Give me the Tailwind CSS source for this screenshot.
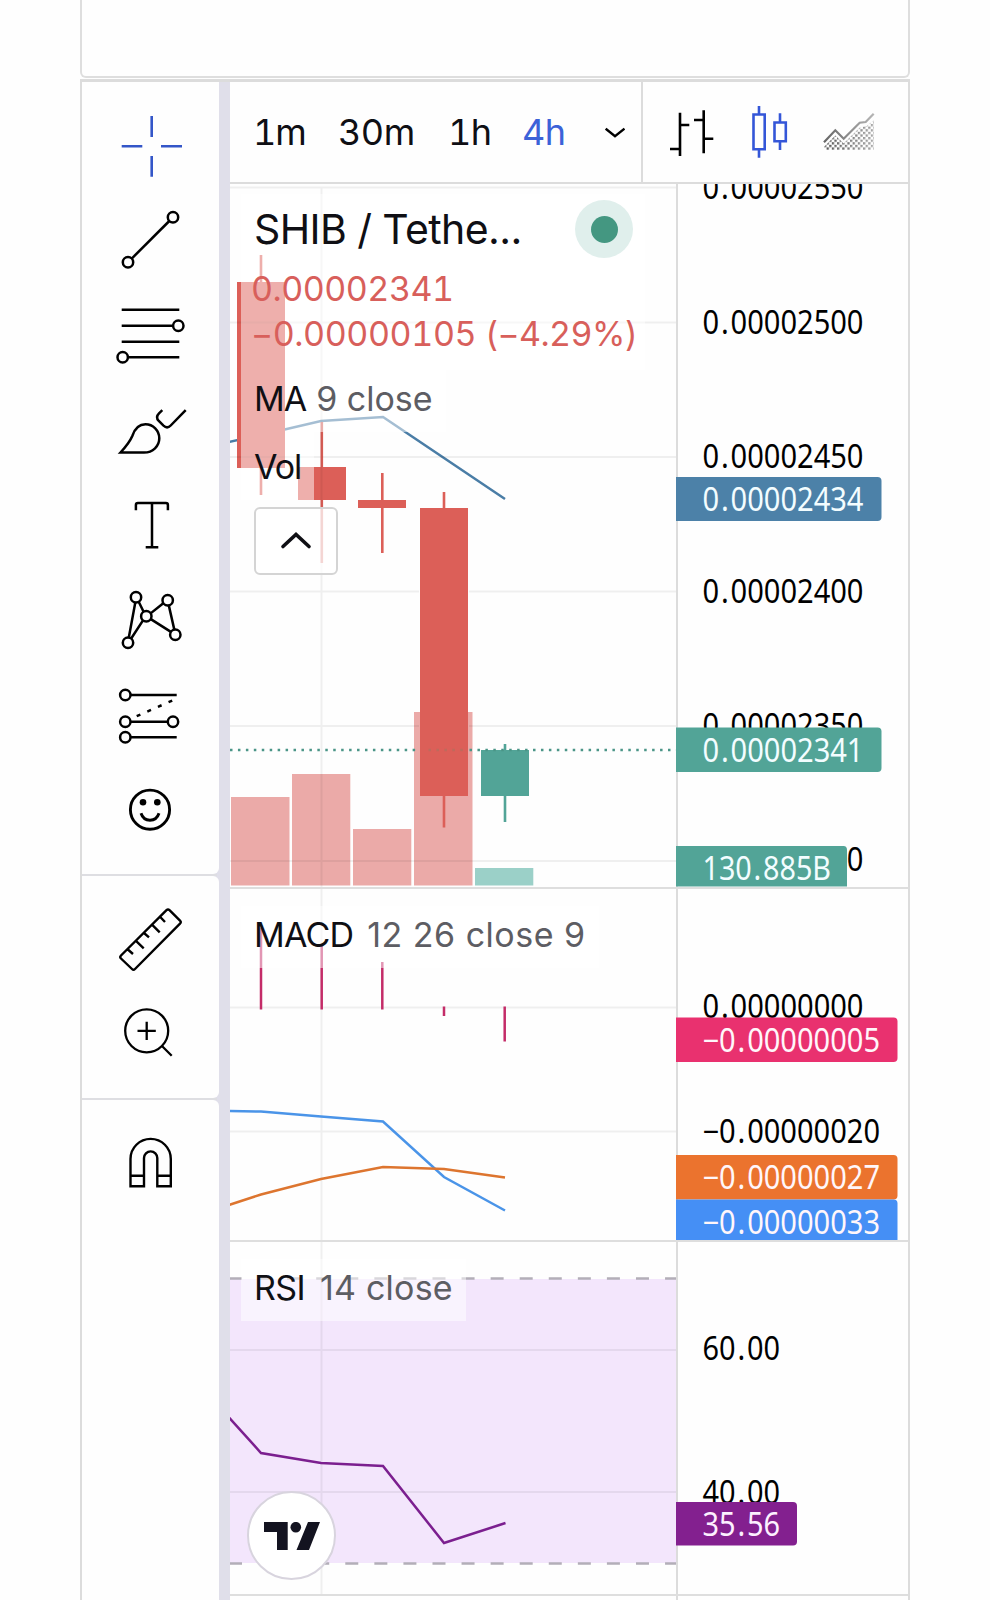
<!DOCTYPE html>
<html lang="en">
<head>
    <meta charset="UTF-8">
    <meta name="viewport" content="width=device-width, initial-scale=1.0">
    <title>SHIB / Tether Chart</title>
    <script src="https://cdn.jsdelivr.net/npm/@tailwindcss/browser@4"></script>
</head>
<body class="bg-[#fefefe] font-['Inter',sans-serif] text-[#0f0f14]">
    <div class="w-[990px] h-[1600px] overflow-hidden flex flex-col pl-20 pr-20">
        <!-- Panel above the widget -->
        <div class="h-[78px] shrink-0 border-2 border-t-0 border-[#dedede] rounded-b-md"></div>

        <!-- Chart widget -->
        <div class="mt-px h-[1530px] w-[830px] shrink-0 border-3 border-x-2 border-b-0 border-[#dcdcdc] flex">

            <!-- Drawing toolbar -->
            <div class="w-[148px] shrink-0 bg-[#e0dfea] pr-[11px] flex flex-col">
                <div class="h-[792px] shrink-0 pt-[17px] bg-[#fefefe] rounded-br-md flex flex-col">
                    <svg class="w-[137px] h-[95px]" viewBox="0 0 137 95" fill="none" stroke="#3456c8" stroke-width="2.6">
                        <path d="M39.7 47.3H60.3M79 47.3H100M69.7 17V38M69.7 57V77.7"/>
                    </svg>
                    <svg class="w-[137px] h-[95px]" viewBox="0 0 137 95" fill="none" stroke="#000" stroke-width="2.5">
                        <circle cx="91" cy="23.3" r="5.2"/><circle cx="46" cy="68.3" r="5.2"/>
                        <path d="M87.3 27L49.7 64.6"/>
                    </svg>
                    <svg class="w-[137px] h-[95px]" viewBox="0 0 137 95" fill="none" stroke="#000" stroke-width="2.5">
                        <path d="M39.7 20.7H97.3M39.7 36.7H91M39.7 52.7H97.3M46 68.3H97.3"/>
                        <circle cx="96.3" cy="36.7" r="5.2"/><circle cx="40.7" cy="68.3" r="5.2"/>
                    </svg>
                    <svg class="w-[137px] h-[95px]" viewBox="0 0 137 95" fill="none" stroke="#000" stroke-width="2.5">
                        <path d="M38.5 68.5C44 62.5 48 57.5 50.3 52C52.5 45.5 56.5 40.3 63.5 40.3C71 40.3 77.3 46.5 77.3 54.3C77.3 62 71 68.5 62 68.5Z"/>
                        <path d="M80.3 26.2L77 29.3C74.5 31.8 74.5 34.5 76.8 37L81.5 41.7C84 44 86.3 44 88.7 41.5L103.7 26.2"/>
                    </svg>
                    <svg class="w-[137px] h-[95px]" viewBox="0 0 137 95" fill="none" stroke="#000" stroke-width="2.5">
                        <path d="M53.9 31.3V26Q53.9 24 55.9 24H83.9Q85.9 24 85.9 26V31.3M70 24V68.3M63.7 68.3H76.3"/>
                    </svg>
                    <svg class="w-[137px] h-[95px]" viewBox="0 0 137 95" fill="none" stroke="#000" stroke-width="2.5">
                        <circle cx="54" cy="23.3" r="5.2"/><circle cx="85.7" cy="26.3" r="5.2"/>
                        <circle cx="64.3" cy="42.3" r="5.2"/><circle cx="93.3" cy="60.7" r="5.2"/>
                        <circle cx="46" cy="68.7" r="5.2"/>
                        <path d="M53.3 28.5L46.8 63.5M56.7 27.8L61.6 37.8M61 46.4L49.2 64.5M68.6 39.4L81.3 29.2M68.8 45.1L88.9 57.9M86.8 31.4L92.3 55.6"/>
                    </svg>
                    <svg class="w-[137px] h-[95px]" viewBox="0 0 137 95" fill="none" stroke="#000" stroke-width="2.5">
                        <circle cx="43.3" cy="26" r="5.2"/><circle cx="43.3" cy="52.7" r="5.2"/>
                        <circle cx="91" cy="52.7" r="5.2"/><circle cx="43.3" cy="68.3" r="5.2"/>
                        <path d="M48.5 26H94.7M48.5 52.7H85.8M48.5 68.3H94.7"/>
                        <path d="M54.7 47.2L91.5 31" stroke-dasharray="4 7.6"/>
                    </svg>
                    <svg class="w-[137px] h-[95px]" viewBox="0 0 137 95" fill="none" stroke="#000" stroke-width="2.9">
                        <circle cx="68" cy="45.7" r="19.6"/>
                        <circle cx="61" cy="38.3" r="3.3" fill="#000" stroke="none"/>
                        <circle cx="75.3" cy="38.3" r="3.3" fill="#000" stroke="none"/>
                        <path d="M59 49.3C62 58.5 74 58.5 77 49.3"/>
                    </svg>
                </div>
                <div class="h-[2px] w-[135px] shrink-0 bg-[#dedee2]"></div>
                <div class="h-[222px] shrink-0 pt-4 bg-[#fefefe] rounded-r-md flex flex-col">
                    <svg class="w-[137px] h-[95px]" viewBox="0 0 137 95" fill="none" stroke="#000" stroke-width="2.4">
                        <path d="M84.5 18.2Q86 16.7 87.5 18.2L98 28.7Q99.5 30.2 98 31.7L53 77Q51.5 78.5 50 77L39 66.5Q37.5 65 39 63.5ZM45.3 57L51 62M53.7 48.7L61.7 56.3M62 41L67 45.3M70 32.7L77.7 40.3M78 24.7L83 30"/>
                    </svg>
                    <svg class="w-[137px] h-[95px]" viewBox="0 0 137 95" fill="none" stroke="#000" stroke-width="2.3">
                        <circle cx="64.7" cy="43.8" r="21.5"/>
                        <path d="M55.5 43.8H73.8M64.7 34.7V53M79.7 58.8L89.7 68.8"/>
                    </svg>
                </div>
                <div class="h-[2px] w-[135px] shrink-0 bg-[#dedee2]"></div>
                <div class="grow pt-[15px] bg-[#fefefe] rounded-tr-md">
                    <svg class="w-[137px] h-[95px]" viewBox="0 0 137 95" fill="none" stroke="#000" stroke-width="2.4">
                        <path d="M48.5 71.3V44A20.15 20.15 0 0 1 88.8 44V71.3H75.3V43A6.65 6.65 0 0 0 62 43V71.3ZM48.5 60.7H62M75.3 60.7H88.8"/>
                    </svg>
                </div>
            </div>

            <!-- Chart column -->
            <div class="w-[678px] shrink-0 flex flex-col">
                <!-- Interval and style bar -->
                <div class="h-[102px] shrink-0 border-b-2 border-[#dcdcdc] flex">
                    <div class="w-[413px] shrink-0 border-r-2 border-[#dcdcdc] flex items-center pl-[23px] text-[36px] leading-[44px] tabular-nums">
                        <span class="w-[85px] tracking-[-1px]">1m</span>
                        <span class="w-[110px] tracking-[-0.5px]">30m</span>
                        <span class="w-[74px] tracking-[-0.5px]">1h</span>
                        <span class="w-[83px] text-[#3c62d8] tracking-[-0.5px]">4h</span>
                        <svg class="w-5 h-3 mt-0.5" viewBox="605 126 20 12" fill="none" stroke="#000" stroke-width="2.4"><path d="M605.7 127.7L615 135.3L624.5 127.7"/></svg>
                    </div>
                    <svg class="w-[265px] h-[100px]" viewBox="643 82 265 100" fill="none" stroke-width="2.6">
                        <defs>
                            <pattern id="checker" width="5.2" height="5.2" x="824" y="124" patternUnits="userSpaceOnUse">
                                <rect width="2.3" height="2.3" fill="#555"/>
                                <rect x="2.6" y="2.6" width="2.3" height="2.3" fill="#555"/>
                            </pattern>
                            <linearGradient id="fadeLine" x1="0" x2="1"><stop offset="0" stop-color="#666"/><stop offset="1" stop-color="#b5b5b5"/></linearGradient>
                            <linearGradient id="fadeFill" x1="0" x2="1"><stop offset="0" stop-color="#fff" stop-opacity="0"/><stop offset="1" stop-color="#fff" stop-opacity=".5"/></linearGradient>
                        </defs>
                        <path stroke="#000" d="M680 112.7V156M680 125H689.3M670 149H680M703.7 110.3V153.3M694 120H703.7M703.7 138.7H713.3"/>
                        <path stroke="#3456d8" d="M753.5 114.5H764.7V149.3H753.5ZM759 106V114.5M759 149.3V157.7M774.5 122.5H785.8V141.3H774.5ZM780 113.3V122.5M780 141.3V150"/>
                        <path fill="url(#checker)" d="M824 147L835.3 135.5L843.7 143.5L860 127.5L867 126L874 120V150H824Z"/>
                        <path fill="url(#fadeFill)" d="M824 147L835.3 135.5L843.7 143.5L860 127.5L867 126L874 120V150H824Z"/>
                        <path stroke="url(#fadeLine)" stroke-width="2.2" d="M824 142.3L835.3 130.3L843.7 138.7L859.7 122.7L865.7 122L873.7 113.7"/>
                    </svg>
                </div>

                <!-- Price pane -->
                <div class="relative h-[705px] shrink-0 border-b-2 border-[#dedede] flex">
                    <svg class="w-[446px] h-[703px] shrink-0" viewBox="230 184 446 703">
                        <path stroke="#4a7da6" stroke-width="2.5" fill="none" d="M229 442L261 435L321 421L383 417L505 499"/>
                        <g fill="#dc5f58">
                            <path d="M259.7 255h2.6v240h-2.6zM237 282h48v186h-48z"/>
                            <path d="M320.5 422h2.6v141h-2.6zM298 467h48v33h-48z"/>
                            <path d="M381 473h2.6v80h-2.6zM358 500h48v8h-48z"/>
                        </g>
                        <g fill="#ebaaa8">
                            <path d="M231 797h58.5v88.5h-58.5zM292 774h58.3v111.5h-58.3zM353 829h58.3v56.5h-58.3zM414 712h58.5v173.5h-58.5z"/>
                        </g>
                        <path fill="#9bd0c8" d="M475 868h58.3v17.5h-58.3z"/>
                        <path fill="#dc5f58" d="M442.7 492h2.6v335.5h-2.6zM420 508h48v288h-48z"/>
                        <path fill="#52a497" d="M503.7 744h2.6v78h-2.6zM481 750h48v46h-48z"/>
                        <path stroke="#000" stroke-opacity=".06" stroke-width="2" d="M229 187.5H676M229 322.5H676M229 457H676M229 591.5H419M469 591.5H676M229 726H419M469 726H676M229 861H676M321.5 188V887"/>
                        <path stroke="#4a9587" stroke-width="2.3" stroke-dasharray="2.5 5.44" d="M230 750H420M469.5 750H676"/>
                        <path stroke="#a0755f" stroke-opacity=".5" stroke-width="2.3" stroke-dasharray="2.5 5.44" d="M428.5 750H468"/>
                    </svg>
                    <svg class="w-[232px] h-[703px] shrink-0 border-l-2 border-[#dcdcdc]" viewBox="678 184 230 703" font-family="'Noto Sans', sans-serif" font-size="32">
                        <g fill="#000">
                            <text x="702.5" y="198.5" dx="0 2 2" textLength="161" lengthAdjust="spacingAndGlyphs">0.00002550</text>
                            <text x="702.5" y="333.5" dx="0 2 2" textLength="161" lengthAdjust="spacingAndGlyphs">0.00002500</text>
                            <text x="702.5" y="468" dx="0 2 2" textLength="161" lengthAdjust="spacingAndGlyphs">0.00002450</text>
                            <text x="702.5" y="602.5" dx="0 2 2" textLength="161" lengthAdjust="spacingAndGlyphs">0.00002400</text>
                            <text x="702.5" y="737" dx="0 2 2" textLength="161" lengthAdjust="spacingAndGlyphs">0.00002350</text>
                            <text x="702.5" y="871" dx="0 2 2" textLength="161" lengthAdjust="spacingAndGlyphs">0.00002300</text>
                        </g>
                    </svg>
                    <!-- Price tags -->
                    <svg class="absolute left-[446px] top-0 w-[232px] h-[703px]" viewBox="676 184 232 703" font-family="'Noto Sans', sans-serif" font-size="32">
                        <path fill="#4c81a8" d="M676 477H877.5q4 0 4 4V517q0 4-4 4H676z"/>
                        <path fill="#52a497" d="M676 727.5H877.5q4 0 4 4V768q0 4-4 4H676z"/>
                        <path fill="#52a497" d="M676 846H843.5q3.5 0 3.5 4V886.5H676z"/>
                        <g fill="#f3fdff">
                            <text x="702.5" y="510.5" dx="0 2 2" textLength="161" lengthAdjust="spacingAndGlyphs">0.00002434</text>
                            <text x="702.5" y="761.5" dx="0 2 2" textLength="161" lengthAdjust="spacingAndGlyphs">0.00002341</text>
                            <text x="702.5" y="880" dx="0 0 0 2 2" textLength="128.5" lengthAdjust="spacingAndGlyphs">130.885B</text>
                        </g>
                    </svg>
                    <!-- Legend -->
                    <div class="absolute left-[11px] top-2.5 flex flex-col items-start">
                        <div class="w-[404px] h-[176px] bg-white/50 pl-[13px] flex flex-col">
                            <div class="flex items-center justify-between pt-1.5 pr-[12px]">
                                <h1 class="text-[41px] leading-[58px] tracking-[-0.6px] whitespace-nowrap">SHIB / Tethe...</h1>
                                <span class="size-[58px] rounded-full bg-[#e0efec] flex items-center justify-center"><span class="size-[27px] rounded-full bg-[#449781]"></span></span>
                            </div>
                            <div class="-ml-[3px] pt-2 text-[34px] leading-[45px] text-[#d85f5b] tabular-nums whitespace-nowrap">
                                <div class="tracking-[-0.5px]">0.00002341</div>
                                <div class="tracking-[-0.4px]">−0.00000105 <span class="tracking-[-0.6px]">(−4.29%)</span></div>
                            </div>
                        </div>
                        <div class="h-[62px] bg-white/50 px-[13px] text-[34px] leading-[58px] whitespace-nowrap flex gap-[10px]"><span class="tracking-[-1px]">MA</span><span class="text-[#5d5d63]">9 close</span></div>
                        <div class="h-[68px] bg-white/50 px-[13px] text-[34px] leading-[70px] tracking-[-1px]">Vol</div>
                        <button class="ml-[13px] mt-[7px] w-[84px] h-[68px] border-2 border-[#d4d4d4] rounded-md bg-white/75 flex items-center justify-center">
                            <svg class="w-8 h-5" viewBox="0 0 32 20" fill="none" stroke="#0f0f14" stroke-width="3.6" stroke-linecap="round"><path d="M3 15.5L16 3.5L29 15.5"/></svg>
                        </button>
                    </div>
                </div>

                <!-- MACD pane -->
                <div class="relative h-[353px] shrink-0 border-b-2 border-[#dedede] flex">
                    <svg class="w-[446px] h-[351px] shrink-0" viewBox="230 889 446 351" fill="none">
                        <path stroke="#000" stroke-opacity=".06" stroke-width="2" d="M229 1007.5H676M229 1131.5H676M321.5 889V1240"/>
                        <path stroke="#c42c68" stroke-width="2.5" d="M261 928V1009.5M321.7 946V1009.5M382.3 962V1009.5M444 1006.5V1016M504.7 1006.5V1041.5"/>
                        <path stroke="#4a94e8" stroke-width="2.5" d="M229 1111L261 1111.5L321 1116.5L383 1121.5L444 1177L505 1210.5"/>
                        <path stroke="#dd752f" stroke-width="2.5" d="M229 1205L261 1194.5L321 1179L383 1167L444 1169L505 1177.5"/>
                    </svg>
                    <svg class="w-[232px] h-[351px] shrink-0 border-l-2 border-[#dcdcdc]" viewBox="678 889 230 351" font-family="'Noto Sans', sans-serif" font-size="32" fill="#000">
                        <text x="702.5" y="1018" dx="0 2 2" textLength="161" lengthAdjust="spacingAndGlyphs">0.00000000</text>
                        <text x="702.5" y="1142.5" dx="0 0 2 2" textLength="177.5" lengthAdjust="spacingAndGlyphs">−0.00000020</text>
                    </svg>
                    <svg class="absolute left-[446px] top-0 w-[232px] h-[351px]" viewBox="676 889 232 351" font-family="'Noto Sans', sans-serif" font-size="32">
                        <path fill="#e9316f" d="M676 1017.5H893.5q4 0 4 4V1058q0 4-4 4H676z"/>
                        <path fill="#eb732e" d="M676 1155H893.5q4 0 4 4V1195.5q0 4-4 4H676z"/>
                        <path fill="#458ff5" d="M676 1199.5H893.5q4 0 4 4V1240H676z"/>
                        <g fill="#fff6fa">
                            <text x="702.5" y="1051.5" dx="0 0 2 2" textLength="177.5" lengthAdjust="spacingAndGlyphs">−0.00000005</text>
                            <text x="702.5" y="1188.5" dx="0 0 2 2" textLength="177.5" lengthAdjust="spacingAndGlyphs">−0.00000027</text>
                            <text x="702.5" y="1233.5" dx="0 0 2 2" textLength="177.5" lengthAdjust="spacingAndGlyphs">−0.00000033</text>
                        </g>
                    </svg>
                    <div class="absolute left-[11px] top-[17px] h-[62px] bg-white/50 px-[13px] text-[34px] leading-[57px] whitespace-nowrap flex gap-[14px]"><span class="tracking-[-0.8px]">MACD</span><span class="text-[#5d5d63] tracking-[0.5px]">12 26 close 9</span></div>
                </div>

                <!-- RSI pane -->
                <div class="relative h-[354px] shrink-0 border-b-2 border-[#dedede] flex">
                    <svg class="w-[446px] h-[352px] shrink-0" viewBox="230 1242 446 352" fill="none">
                        <rect x="230" y="1279" width="446" height="284" fill="#f3e6fc"/>
                        <path stroke="#000" stroke-opacity=".06" stroke-width="2" d="M229 1350H676M229 1492H676M321.5 1242V1594"/>
                        <path stroke="#b3aeb8" stroke-width="2.5" stroke-dasharray="13 16.07" d="M229 1278.5H676M229 1563.5H676"/>
                        <path stroke="#7b1f8f" stroke-width="2.5" d="M229 1417.5L261 1453L321 1463L383 1466L444 1543L505.5 1523"/>
                    </svg>
                    <svg class="w-[232px] h-[352px] shrink-0 border-l-2 border-[#dcdcdc]" viewBox="678 1242 230 352" font-family="'Noto Sans', sans-serif" font-size="32" fill="#000">
                        <text x="702.5" y="1360" dx="0 0 2 2" textLength="77.5" lengthAdjust="spacingAndGlyphs">60.00</text>
                        <text x="702.5" y="1503.5" dx="0 0 2 2" textLength="77.5" lengthAdjust="spacingAndGlyphs">40.00</text>
                    </svg>
                    <svg class="absolute left-[446px] top-0 w-[232px] h-[352px]" viewBox="676 1242 232 352" font-family="'Noto Sans', sans-serif" font-size="32">
                        <path fill="#83208f" d="M676 1502H793q4 0 4 4V1541.5q0 4-4 4H676z"/>
                        <text x="702.5" y="1535.5" dx="0 0 2 2" fill="#fdf0ff" textLength="77.5" lengthAdjust="spacingAndGlyphs">35.56</text>
                    </svg>
                    <div class="absolute left-[11px] top-[17px] h-[62px] bg-white/50 px-[13px] text-[34px] leading-[58px] whitespace-nowrap flex gap-[15px]"><span class="tracking-[-0.6px]">RSI</span><span class="text-[#5d5d63] tracking-[0.2px]">14 close</span></div>
                    <!-- TradingView badge -->
                    <div class="absolute left-[17px] top-[249px] size-[89px] rounded-full bg-white border-2 border-[#d8d4de] flex items-center justify-center">
                        <svg class="w-14 h-7" viewBox="264 1523 56 28" fill="#131320">
                            <path d="M264 1523H287.7V1551H277V1533H264zM308 1523H320L309 1551H296.5z"/>
                            <circle cx="295.8" cy="1528.2" r="5.3"/>
                        </svg>
                    </div>
                </div>
                <!-- Time axis -->
                <div class="grow flex"><div class="w-[448px] border-r-2 border-[#dcdcdc]"></div></div>
            </div>
        </div>
    </div>
</body>
</html>
